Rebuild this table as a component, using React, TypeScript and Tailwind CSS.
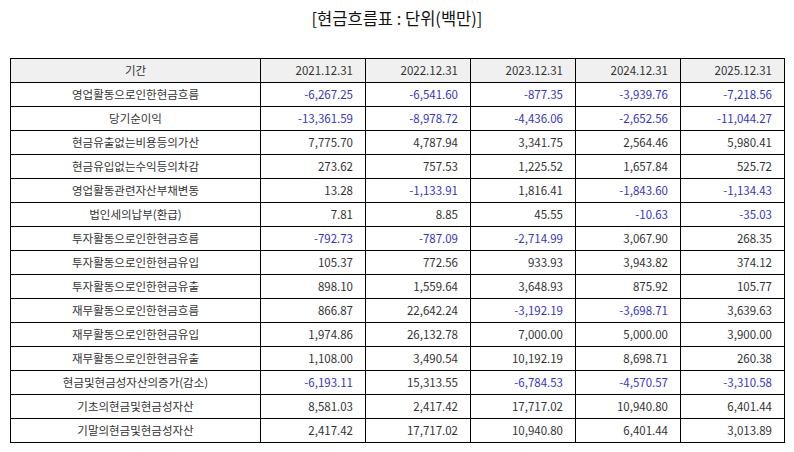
import React from "react";

const headers = ["2021.12.31", "2022.12.31", "2023.12.31", "2024.12.31", "2025.12.31"];

const rows: [string, string[]][] = [
  ["영업활동으로인한현금흐름", ["-6,267.25", "-6,541.60", "-877.35", "-3,939.76", "-7,218.56"]],
  ["당기순이익", ["-13,361.59", "-8,978.72", "-4,436.06", "-2,652.56", "-11,044.27"]],
  ["현금유출없는비용등의가산", ["7,775.70", "4,787.94", "3,341.75", "2,564.46", "5,980.41"]],
  ["현금유입없는수익등의차감", ["273.62", "757.53", "1,225.52", "1,657.84", "525.72"]],
  ["영업활동관련자산부채변동", ["13.28", "-1,133.91", "1,816.41", "-1,843.60", "-1,134.43"]],
  ["법인세의납부(환급)", ["7.81", "8.85", "45.55", "-10.63", "-35.03"]],
  ["투자활동으로인한현금흐름", ["-792.73", "-787.09", "-2,714.99", "3,067.90", "268.35"]],
  ["투자활동으로인한현금유입", ["105.37", "772.56", "933.93", "3,943.82", "374.12"]],
  ["투자활동으로인한현금유출", ["898.10", "1,559.64", "3,648.93", "875.92", "105.77"]],
  ["재무활동으로인한현금흐름", ["866.87", "22,642.24", "-3,192.19", "-3,698.71", "3,639.63"]],
  ["재무활동으로인한현금유입", ["1,974.86", "26,132.78", "7,000.00", "5,000.00", "3,900.00"]],
  ["재무활동으로인한현금유출", ["1,108.00", "3,490.54", "10,192.19", "8,698.71", "260.38"]],
  ["현금및현금성자산의증가(감소)", ["-6,193.11", "15,313.55", "-6,784.53", "-4,570.57", "-3,310.58"]],
  ["기초의현금및현금성자산", ["8,581.03", "2,417.42", "17,717.02", "10,940.80", "6,401.44"]],
  ["기말의현금및현금성자산", ["2,417.42", "17,717.02", "10,940.80", "6,401.44", "3,013.89"]],
];

const font = { fontFamily: '"Noto Sans CJK KR", "Noto Sans", sans-serif' };

export default function App() {
  return (
    <div className="w-[794px] h-[452px] bg-white text-[#333]" style={font}>
      <div className="h-[36px] flex items-center justify-center text-[16.5px] text-[#111] leading-none">
        [현금흐름표 : 단위(백만)]
      </div>
      <div className="px-[10px] pt-[22px]">
        <table className="w-[774px] border-collapse table-fixed text-[11.5px] leading-none">
          <colgroup>
            <col className="w-[250px]" />
            <col className="w-[105px]" />
            <col className="w-[105px]" />
            <col className="w-[105px]" />
            <col className="w-[105px]" />
            <col className="w-[104px]" />
          </colgroup>
          <thead>
            <tr className="h-[24px] bg-[#f0f0f0]">
              <th className="border border-black font-normal text-center">기간</th>
              {headers.map((h) => (
                <th key={h} className="border border-black font-normal text-right pr-[12px]">
                  {h}
                </th>
              ))}
            </tr>
          </thead>
          <tbody>
            {rows.map(([label, vals]) => (
              <tr key={label} className="h-[24px]">
                <td className="border border-black text-center">{label}</td>
                {vals.map((v, i) => (
                  <td
                    key={i}
                    className={
                      v.startsWith("-")
                        ? "border border-black text-right pr-[12px] text-[#3535c8]"
                        : "border border-black text-right pr-[12px]"
                    }
                  >
                    {v}
                  </td>
                ))}
              </tr>
            ))}
          </tbody>
        </table>
      </div>
    </div>
  );
}
